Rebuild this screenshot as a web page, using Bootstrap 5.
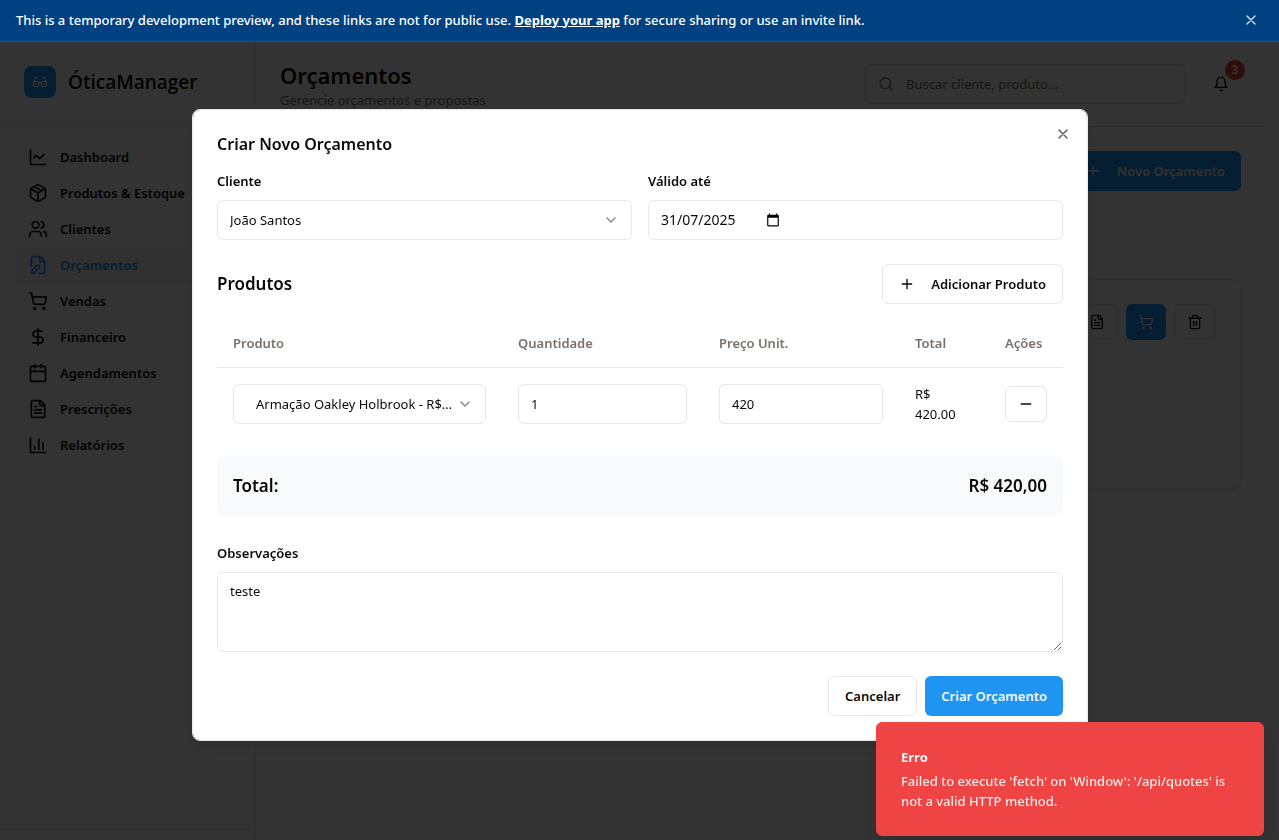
<!DOCTYPE html>
<html lang="pt-BR">
<head>
<meta charset="utf-8">
<meta name="viewport" content="width=device-width, initial-scale=1">
<title>ÓticaManager</title>
<link href="https://cdn.jsdelivr.net/npm/bootstrap@5.3.0/dist/css/bootstrap.min.css" rel="stylesheet">
<style>
  :root { --brand: #2094f3; --line: #e5e7eb; --ink: #0c0a09; --soft: #78716c; }
  body {
    font-family: "Noto Sans", "Open Sans", sans-serif;
    font-size: 13px; line-height: 20px; color: var(--ink); background: #fff;
  }
  .ico { width: 16px; height: 16px; flex: none; fill: none; stroke: currentColor; stroke-width: 2; stroke-linecap: round; stroke-linejoin: round; }
  .ico-nav { width: 20px; height: 20px; }
  .ico-date { width: 14px; height: 14px; }

  .preview-bar { background: #004182; border-bottom: 1px solid #12569c; color: #fff; height: 42px; padding: 0 16px 2px; z-index: 1080; font-weight: 500; flex: none; }
  .preview-bar a { color: #fff; font-weight: 700; }
  .preview-bar .x-btn { color: #d6e4f2; }
  .x-btn { border: 0; background: none; padding: 0; line-height: 0; }

  .app-shell { min-height: 100vh; flex: none; padding-right: 14px; }
  .side { width: 256px; flex: none; border-right: 1px solid var(--line); }
  .side-head { height: 81px; border-bottom: 1px solid var(--line); }
  .side-foot { height: 54px; border-top: 1px solid var(--line); }
  .logo-box { width: 32px; height: 32px; border-radius: 8px; background: var(--brand); color: #fff; }
  .brand-name { font-family: "Open Sans", sans-serif; font-size: 19px; line-height: 28px; font-weight: 600; }
  .side .nav-link { color: var(--ink); font-weight: 600; padding: 8px 12px; gap: 12px; border-radius: 6px; }
  .side .nav-link.active { color: var(--brand); background: #f5f5f4; }

  .top-head { height: 85px; border-bottom: 1px solid var(--line); }
  .page-title { font-size: 22px; line-height: 30px; padding-top: 2px; font-weight: 600; }
  .muted { color: var(--soft); }
  .search-wrap { width: 320px; height: 40px; border: 1px solid var(--line); border-radius: 6px; padding: 0 12px; }
  .search-wrap input, .date-wrap input { border: 0; background: none; outline: 0; padding: 0; color: inherit; }
  .search-wrap input::placeholder { color: var(--soft); }
  .bell-btn { width: 40px; height: 40px; }
  .bell-badge { width: 20px; height: 20px; right: -4px; top: -4px; background: #ef4444; color: #fff; font-size: 12px; line-height: 20px; font-weight: 600; }

  .btn-ui { --bs-btn-font-size: 13px; --bs-btn-line-height: 20px; --bs-btn-font-weight: 600; --bs-btn-border-radius: 6px; --bs-btn-color: var(--ink); --bs-btn-border-color: var(--line); --bs-btn-bg: #fff; --bs-btn-padding-x: 16px; --bs-btn-padding-y: 0; height: 40px; display: inline-flex; align-items: center; justify-content: center; gap: 16px; }
  .btn-brand { --bs-btn-color: #f8fafc; --bs-btn-bg: var(--brand); --bs-btn-border-width: 0; }
  .btn-sq { --bs-btn-padding-x: 12px; height: 36px; }
  .toolbar { margin-bottom: 88px; }
  .quote-card { height: 210px; border: 1px solid var(--line); border-radius: 8px; padding: 24px; box-shadow: 0 1px 2px rgba(0,0,0,.05); }

  .modal-backdrop { --bs-backdrop-opacity: .8; }
  .modal { --bs-modal-width: 896px; --bs-modal-margin: 0px; padding: 10px 0 0 1px; }
  .modal-content { border: 1px solid var(--line); border-radius: 8px; padding: 24px; gap: 24px; box-shadow: 0 10px 15px -3px rgba(0,0,0,.1); color: var(--ink); }
  .modal-close { right: 16px; top: 16px; color: #55524f; }
  .dialog-title { font-size: 16px; line-height: 20px; font-weight: 600; margin-bottom: 20px; }
  .block-title, .total-text { font-size: 17px; line-height: 28px; font-weight: 600; }
  .field-label { font-weight: 600; line-height: 14px; margin-bottom: 12px; display: block; }
  .field { height: 40px; font-size: 13px; line-height: 20px; border: 1px solid var(--line); border-radius: 6px; padding: 8px 12px; color: var(--ink); background-color: #fff; }
  select.field { background-size: 16px 16px; background-position: right 12px center; text-overflow: ellipsis;
    background-image: url("data:image/svg+xml,%3Csvg xmlns='http://www.w3.org/2000/svg' viewBox='0 0 24 24' fill='none' stroke='%23868483' stroke-width='2' stroke-linecap='round' stroke-linejoin='round'%3E%3Cpath d='m6 9 6 6 6-6'/%3E%3C/svg%3E"); }
  select.field-product { padding-left: 22px; padding-right: 29px; }
  .date-wrap input { width: 105px; font-size: 14px; }
  textarea.field { height: 80px; }
  .notes { padding-top: 6px; }

  .items-table { table-layout: fixed; margin: 0; --bs-table-color: var(--ink); --bs-table-bg: transparent; }
  .items-table th { color: var(--soft); font-weight: 600; padding: 13px 16px 14px; border-color: var(--line); }
  .items-table td { padding: 16px; border: 0; vertical-align: middle; }
  .col-qty { width: 201px; } .col-price { width: 196px; } .col-sum { width: 90px; } .col-act { width: 74px; }
  .total-box { background: #f9fafb; border-radius: 8px; padding: 16px; margin-top: 16px; }

  .toast-container { z-index: 1090; padding: 0 15px 4px; }
  .toast-err { --bs-toast-max-width: 388px; width: 388px; background: #ef4444; color: #fafafa; border: 1px solid #ef4444; border-radius: 6px; padding: 24px 32px 24px 24px; box-shadow: 0 10px 15px -3px rgba(0,0,0,.1); font-size: 13px; }
  .toast-err p { opacity: .9; font-weight: 500; }
</style>
</head>
<body class="vh-100 overflow-hidden d-flex flex-column">

<svg class="d-none" aria-hidden="true">
  <symbol id="i-x" viewBox="0 0 24 24"><path d="M18 6 6 18M6 6l12 12"/></symbol>
  <symbol id="i-plus" viewBox="0 0 24 24"><path d="M5 12h14M12 5v14"/></symbol>
  <symbol id="i-minus" viewBox="0 0 24 24"><path d="M5 12h14"/></symbol>
  <symbol id="i-glasses" viewBox="0 0 24 24"><circle cx="6" cy="15" r="4"/><circle cx="18" cy="15" r="4"/><path d="M14 15a2 2 0 0 0-4 0M2.5 13 5 7c.7-1.3 1.4-2 3-2M21.5 13 19 7c-.7-1.3-1.5-2-3-2"/></symbol>
  <symbol id="i-line" viewBox="0 0 24 24"><path d="M3 3v18h18M19 9l-5 5-4-4-3 3"/></symbol>
  <symbol id="i-box" viewBox="0 0 24 24"><path d="m7.5 4.27 9 5.15M21 8a2 2 0 0 0-1-1.73l-7-4a2 2 0 0 0-2 0l-7 4A2 2 0 0 0 3 8v8a2 2 0 0 0 1 1.73l7 4a2 2 0 0 0 2 0l7-4A2 2 0 0 0 21 16ZM3.3 7l8.7 5 8.7-5M12 22V12"/></symbol>
  <symbol id="i-users" viewBox="0 0 24 24"><path d="M16 21v-2a4 4 0 0 0-4-4H6a4 4 0 0 0-4 4v2"/><circle cx="9" cy="7" r="4"/><path d="M22 21v-2a4 4 0 0 0-3-3.87M16 3.13a4 4 0 0 1 0 7.75"/></symbol>
  <symbol id="i-edit" viewBox="0 0 24 24"><path d="M12.5 22H18a2 2 0 0 0 2-2V7l-5-5H6a2 2 0 0 0-2 2v9.5M14 2v4a2 2 0 0 0 2 2h4M13.378 15.626a1 1 0 1 0-3.004-3.004l-5.01 5.012a2 2 0 0 0-.506.854l-.837 2.87a.5.5 0 0 0 .62.62l2.87-.837a2 2 0 0 0 .854-.506z"/></symbol>
  <symbol id="i-cart" viewBox="0 0 24 24"><circle cx="8" cy="21" r="1"/><circle cx="19" cy="21" r="1"/><path d="M2.05 2.05h2l2.66 12.42a2 2 0 0 0 2 1.58h9.78a2 2 0 0 0 1.95-1.57l1.65-7.43H5.12"/></symbol>
  <symbol id="i-money" viewBox="0 0 24 24"><path d="M12 2v20M17 5H9.5a3.5 3.5 0 0 0 0 7h5a3.5 3.5 0 0 1 0 7H6"/></symbol>
  <symbol id="i-cal" viewBox="0 0 24 24"><path d="M8 2v4M16 2v4M3 10h18"/><rect x="3" y="4" width="18" height="18" rx="2"/></symbol>
  <symbol id="i-doc" viewBox="0 0 24 24"><path d="M15 2H6a2 2 0 0 0-2 2v16a2 2 0 0 0 2 2h12a2 2 0 0 0 2-2V7ZM14 2v4a2 2 0 0 0 2 2h4M10 9H8M16 13H8M16 17H8"/></symbol>
  <symbol id="i-bars" viewBox="0 0 24 24"><path d="M3 3v18h18M18 17V9M13 17V5M8 17v-3"/></symbol>
  <symbol id="i-search" viewBox="0 0 24 24"><circle cx="11" cy="11" r="8"/><path d="m21 21-4.3-4.3"/></symbol>
  <symbol id="i-bell" viewBox="0 0 24 24"><path d="M6 8a6 6 0 0 1 12 0c0 7 3 9 3 9H3s3-2 3-9M10.3 21a1.94 1.94 0 0 0 3.4 0"/></symbol>
  <symbol id="i-trash" viewBox="0 0 24 24"><path d="M3 6h18M19 6v14a2 2 0 0 1-2 2H7a2 2 0 0 1-2-2V6M8 6V4a2 2 0 0 1 2-2h4a2 2 0 0 1 2 2v2M10 11v6M14 11v6"/></symbol>
  <symbol id="i-date" viewBox="0 0 24 24"><path fill="currentColor" stroke="none" d="M20 3h-1V1h-2v2H7V1H5v2H4c-1.100 0-2 .9-2 2v16c0 1.100.9 2 2 2h16c1.100 0 2-.9 2-2V5c0-1.100-.9-2-2-2zm0 18H4V8h16v13z"/></symbol>
</svg>

<div class="preview-bar position-relative d-flex align-items-center justify-content-between">
  <span>This is a temporary development preview, and these links are not for public use. <a href="#">Deploy your app</a> for secure sharing or use an invite link.</span>
  <button class="x-btn me-1" type="button" aria-label="Fechar aviso"><svg class="ico"><use href="#i-x"/></svg></button>
</div>

<div class="app-shell d-flex">
  <aside class="side d-flex flex-column">
    <div class="side-head d-flex align-items-center gap-2 px-4">
      <span class="logo-box d-flex align-items-center justify-content-center me-1"><svg class="ico"><use href="#i-glasses"/></svg></span>
      <span class="brand-name">ÓticaManager</span>
    </div>
    <nav class="nav flex-column flex-nowrap p-3">
      <a class="nav-link d-flex" href="#"><svg class="ico ico-nav"><use href="#i-line"/></svg>Dashboard</a>
      <a class="nav-link d-flex" href="#"><svg class="ico ico-nav"><use href="#i-box"/></svg>Produtos &amp; Estoque</a>
      <a class="nav-link d-flex" href="#"><svg class="ico ico-nav"><use href="#i-users"/></svg>Clientes</a>
      <a class="nav-link d-flex active" href="#" aria-current="page"><svg class="ico ico-nav"><use href="#i-edit"/></svg>Orçamentos</a>
      <a class="nav-link d-flex" href="#"><svg class="ico ico-nav"><use href="#i-cart"/></svg>Vendas</a>
      <a class="nav-link d-flex" href="#"><svg class="ico ico-nav"><use href="#i-money"/></svg>Financeiro</a>
      <a class="nav-link d-flex" href="#"><svg class="ico ico-nav"><use href="#i-cal"/></svg>Agendamentos</a>
      <a class="nav-link d-flex" href="#"><svg class="ico ico-nav"><use href="#i-doc"/></svg>Prescrições</a>
      <a class="nav-link d-flex" href="#"><svg class="ico ico-nav"><use href="#i-bars"/></svg>Relatórios</a>
    </nav>
    <div class="side-foot mt-auto"></div>
  </aside>

  <div class="flex-grow-1">
    <header class="top-head d-flex align-items-center justify-content-between px-4">
      <div>
        <h1 class="page-title m-0">Orçamentos</h1>
        <p class="muted m-0">Gerencie orçamentos e propostas</p>
      </div>
      <div class="d-flex align-items-center gap-3">
        <label class="search-wrap d-flex align-items-center muted">
          <svg class="ico"><use href="#i-search"/></svg>
          <input class="flex-grow-1 ms-2 ps-1" type="text" placeholder="Buscar cliente, produto..." aria-label="Buscar">
        </label>
        <button class="x-btn bell-btn position-relative d-flex align-items-center justify-content-center" type="button" aria-label="Notificações">
          <svg class="ico"><use href="#i-bell"/></svg>
          <span class="bell-badge position-absolute rounded-circle">3</span>
        </button>
      </div>
    </header>
    <main class="p-4">
      <div class="toolbar d-flex justify-content-end">
        <button class="btn btn-ui btn-brand" type="button"><svg class="ico"><use href="#i-plus"/></svg>Novo Orçamento</button>
      </div>
      <section class="quote-card d-flex justify-content-end align-items-start gap-2">
        <button class="btn btn-ui btn-sq" type="button" aria-label="Ver orçamento"><svg class="ico"><use href="#i-doc"/></svg></button>
        <button class="btn btn-ui btn-brand btn-sq" type="button" aria-label="Converter em venda"><svg class="ico"><use href="#i-cart"/></svg></button>
        <button class="btn btn-ui btn-sq" type="button" aria-label="Excluir"><svg class="ico"><use href="#i-trash"/></svg></button>
      </section>
    </main>
  </div>
</div>

<div class="modal-backdrop show"></div>

<div class="modal d-block" role="dialog" aria-modal="true" aria-labelledby="dlg-title">
  <div class="modal-dialog modal-dialog-centered mx-auto">
    <form class="modal-content">
      <button class="x-btn modal-close position-absolute" type="button" aria-label="Fechar"><svg class="ico"><use href="#i-x"/></svg></button>
      <div>
        <h2 class="dialog-title" id="dlg-title">Criar Novo Orçamento</h2>
        <div class="row gx-3">
          <div class="col-6">
            <label class="field-label" for="cliente">Cliente</label>
            <select class="form-select field" id="cliente"><option>João Santos</option></select>
          </div>
          <div class="col-6">
            <label class="field-label" for="valido">Válido até</label>
            <div class="field date-wrap d-flex align-items-center">
              <input id="valido" type="text" value="31/07/2025">
              <button class="x-btn" type="button" aria-label="Abrir calendário"><svg class="ico ico-date"><use href="#i-date"/></svg></button>
            </div>
          </div>
        </div>
      </div>

      <div>
        <div class="d-flex align-items-center justify-content-between mb-3">
          <h3 class="block-title m-0">Produtos</h3>
          <button class="btn btn-ui" type="button"><svg class="ico"><use href="#i-plus"/></svg>Adicionar Produto</button>
        </div>
        <table class="table items-table">
          <colgroup><col><col class="col-qty"><col class="col-price"><col class="col-sum"><col class="col-act"></colgroup>
          <thead><tr><th scope="col">Produto</th><th scope="col">Quantidade</th><th scope="col">Preço Unit.</th><th scope="col">Total</th><th scope="col">Ações</th></tr></thead>
          <tbody>
            <tr>
              <td><select class="form-select field field-product" aria-label="Produto"><option>Armação Oakley Holbrook - R$420,00</option></select></td>
              <td><input class="form-control field" type="text" inputmode="numeric" value="1" aria-label="Quantidade"></td>
              <td><input class="form-control field" type="text" inputmode="decimal" value="420" aria-label="Preço Unit."></td>
              <td>R$ 420.00</td>
              <td><button class="btn btn-ui btn-sq" type="button" aria-label="Remover"><svg class="ico"><use href="#i-minus"/></svg></button></td>
            </tr>
          </tbody>
        </table>
        <div class="total-box total-text d-flex justify-content-between"><span>Total:</span><span>R$ 420,00</span></div>
      </div>

      <div class="notes">
        <label class="field-label" for="obs">Observações</label>
        <textarea class="form-control field" id="obs">teste</textarea>
      </div>

      <div class="d-flex justify-content-end gap-2">
        <button class="btn btn-ui" type="button">Cancelar</button>
        <button class="btn btn-ui btn-brand" type="submit">Criar Orçamento</button>
      </div>
    </form>
  </div>
</div>

<div class="toast-container position-fixed bottom-0 end-0">
  <div class="toast show toast-err" role="alert">
    <strong class="d-block mb-1">Erro</strong>
    <p class="m-0">Failed to execute 'fetch' on 'Window': '/api/quotes' is not a valid HTTP method.</p>
  </div>
</div>

<script src="https://cdn.jsdelivr.net/npm/bootstrap@5.3.0/dist/js/bootstrap.bundle.min.js"></script>
</body>
</html>
